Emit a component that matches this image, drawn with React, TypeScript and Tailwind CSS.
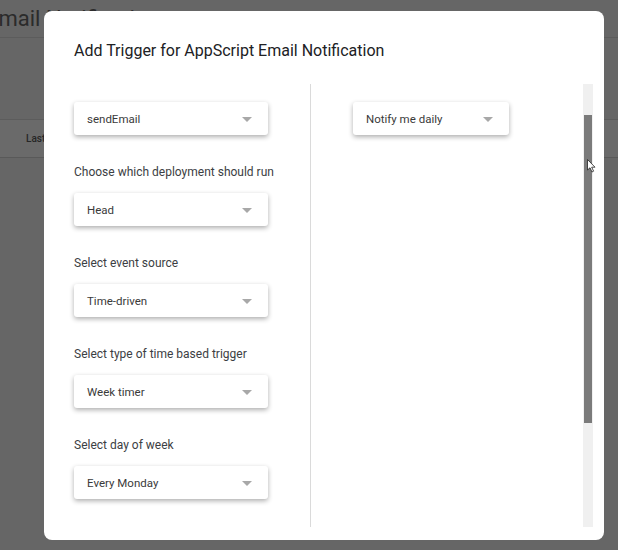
import React from "react";

const font = { fontFamily: "Roboto, 'Noto Sans', Arial, sans-serif" };

function Select({ value, width }: { value: string; width: string }) {
  return (
    <div
      className={`${width} h-[33px] flex items-center justify-between pl-[13px] pr-[16px] pt-[2px] bg-white rounded-[3px] shadow-[0_2px_5px_rgba(0,0,0,0.32)] text-[11.5px] text-[#3a3a3a]`}
    >
      <span>{value}</span>
      <svg width="10" height="5" viewBox="0 0 10 5">
        <path d="M0 0 L10 0 L5 5 Z" fill="#a8a8a8" />
      </svg>
    </div>
  );
}

function Field({ label, value }: { label: string; value: string }) {
  return (
    <div className="flex flex-col">
      <div className="pt-[29px] pb-[13px] leading-[16px] text-[12px] text-[#3c4043]">{label}</div>
      <Select value={value} width="w-[194px]" />
    </div>
  );
}

export default function App() {
  return (
    <div className="relative w-[618px] h-[550px] overflow-hidden bg-[#666666]" style={font}>
      {/* page behind the dim overlay */}
      <div className="flex flex-col">
        <div className="h-[38px] border-b border-[#5c5c5c] flex items-center -ml-[14px]">
          <span className="text-[22px] text-[#2b2b2b]">Email Notification</span>
        </div>
        <div className="h-[82px] border-b border-[#5c5c5c]" />
        <div className="h-[38px] bg-[#6a6a6a] border-b border-[#595959] flex items-center pl-[26px] text-[10px] text-[#262626] font-medium">
          Last
        </div>
      </div>

      {/* dialog */}
      <div className="absolute left-[44px] top-[11px] w-[560px] h-[529px] bg-white rounded-[8px] flex flex-col">
        <div className="h-[73px] pl-[30px] pt-[28px] text-[16px] text-[#202124] leading-[24px]">
          Add Trigger for AppScript Email Notification
        </div>
        <div className="flex h-[443px] pr-[11px]">
          <div className="w-[267px] pl-[30px] pt-[18px] flex flex-col border-r border-[#dadada]">
            <Select value="sendEmail" width="w-[194px]" />
            <Field label="Choose which deployment should run" value="Head" />
            <Field label="Select event source" value="Time-driven" />
            <Field label="Select type of time based trigger" value="Week timer" />
            <Field label="Select day of week" value="Every Monday" />
          </div>
          <div className="flex-1 pl-[42px] pt-[18px]">
            <Select value="Notify me daily" width="w-[156px]" />
          </div>
          <div className="w-[10px] bg-[#f0f0f0] pt-[31px]">
            <div className="relative mx-[1px] h-[308px] bg-[#7b7b7b]">
              <svg className="absolute left-[3px] top-[44px]" width="9" height="14" viewBox="0 0 9 14">
                <path d="M0.5 0.5 L0.5 11 L3 8.8 L5 13 L6.6 12.2 L4.7 8.2 L8 8.2 Z" fill="#ffffff" stroke="#222" strokeWidth="0.8" />
              </svg>
            </div>
          </div>
        </div>
      </div>
    </div>
  );
}
